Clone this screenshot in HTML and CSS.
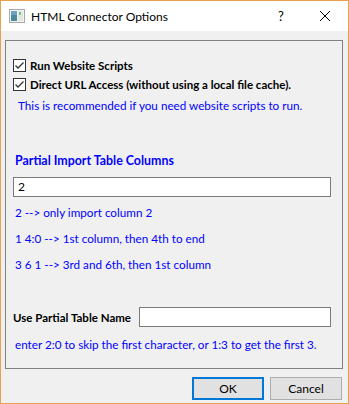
FILE: index.html
```html
<!DOCTYPE html>
<html lang="en">
<head>
  <meta charset="UTF-8" />
  <title>HTML Connector Options</title>
  <link rel="stylesheet" href="styles.css">
</head>
<body>
  <div class="window">
    <div class="titlebar">
      <svg class="app-icon" width="16" height="14" viewBox="0 0 16 14">
        <rect x="0.5" y="0.5" width="15" height="13" fill="#f4f4f4" stroke="#a8a8a8"/>
        <rect x="2" y="2" width="6" height="10" fill="#4a8a9a"/>
        <rect x="2" y="2" width="6" height="4" fill="#6fa0c0"/>
        <rect x="9" y="2" width="5" height="10" fill="#dde8e0"/>
        <rect x="10" y="3" width="2" height="3" fill="#7cc08a"/>
      </svg>
      <span class="title">HTML Connector Options</span>
      <span class="help">?</span>
      <svg class="close" width="12" height="12" viewBox="0 0 12 12">
        <path d="M1 1 L11 11 M11 1 L1 11" stroke="#000" stroke-width="1"/>
      </svg>
    </div>

    <div class="content">
      <div class="group">
        <label class="check-row row-first">
          <span class="checkbox">
            <svg width="11" height="11" viewBox="0 0 11 11"><path d="M1.5 5.5 L4 8 L9.5 2.5" fill="none" stroke="#333" stroke-width="1.3"/></svg>
          </span>
          <span class="bold">Run Website Scripts</span>
        </label>
        <label class="check-row">
          <span class="checkbox">
            <svg width="11" height="11" viewBox="0 0 11 11"><path d="M1.5 5.5 L4 8 L9.5 2.5" fill="none" stroke="#333" stroke-width="1.3"/></svg>
          </span>
          <span class="bold">Direct URL Access (without using a local file cache).</span>
        </label>
        <p class="note note-indent">This is recommended if you need website scripts to run.</p>

        <p class="heading">Partial Import Table Columns</p>
        <div class="field">2</div>
        <p class="note hint first-hint">2 --&gt; only import column 2</p>
        <p class="note hint">1 4:0 --&gt; 1st column, then 4th to end</p>
        <p class="note hint">3 6 1 --&gt; 3rd and 6th, then 1st column</p>

        <div class="name-row">
          <span class="bold">Use Partial Table Name</span>
          <div class="field field-name"></div>
        </div>
        <p class="note hint last-hint">enter 2:0 to skip the first character, or 1:3 to get the first 3.</p>
      </div>

      <div class="buttons">
        <button class="btn btn-default">OK</button>
        <button class="btn">Cancel</button>
      </div>
    </div>
  </div>
</body>
</html>
```

FILE: styles.css
```css
* { margin: 0; padding: 0; box-sizing: border-box; }

html, body {
  width: 349px;
  height: 404px;
  overflow: hidden;
  font-family: Lato, "Noto Sans", sans-serif;
  font-size: 11.5px;
  color: #000;
}

.window {
  width: 349px;
  height: 404px;
  border: 1px solid #e9a04f;
  background: #f0f0f0;
  display: flex;
  flex-direction: column;
}

/* Title bar */
.titlebar {
  height: 30px;
  background: #fff;
  display: flex;
  align-items: center;
  padding-left: 8px;
}
.app-icon { margin-right: 6px; }
.title { flex: 1; font-size: 12px; }
.help { width: 14px; margin-right: 27px; font-size: 13px; }
.close { margin-right: 17px; }

/* Body */
.content {
  padding: 9px 5px 0 4px;
}

.group {
  height: 329px;
  border: 1px solid #808080;
  padding: 18px 0 0 7px;
}

.check-row {
  display: flex;
  align-items: center;
  height: 13px;
  line-height: 13px;
  margin-top: 6px;
  white-space: nowrap;
}
.row-first { margin-top: 0; }

.checkbox {
  flex: none;
  width: 13px;
  height: 13px;
  border: 1px solid #333;
  background: #fff;
  display: flex;
  align-items: center;
  justify-content: center;
  margin-right: 4px;
}

.bold { font-weight: bold; }

.note {
  color: #0000ff;
  font-size: 11.7px;
  line-height: 16px;
  height: 16px;
  white-space: nowrap;
}
.note-indent { margin: 6px 0 0 5px; }

.heading {
  color: #0000ff;
  font-weight: bold;
  font-size: 12.4px;
  line-height: 16px;
  margin: 40px 0 0 2px;
}

.field {
  width: 318px;
  height: 20px;
  border: 1px solid #7a7a7a;
  background: #fff;
  padding: 0 4px;
  font-size: 12px;
  line-height: 18px;
  margin-top: 8px;
}

.hint { margin: 10px 0 0 2px; }
.first-hint { margin-top: 7px; }
.last-hint { margin-top: 9px; }

.name-row {
  display: flex;
  align-items: center;
  margin-top: 35px;
  white-space: nowrap;
}
.name-row .bold { width: 126px; }
.field-name { width: 192px; margin-top: 0; }

.buttons {
  display: flex;
  justify-content: flex-end;
  gap: 6px;
  padding: 8px 1px 0 0;
}

.btn {
  width: 72px;
  height: 23px;
  font-family: inherit;
  font-size: 12px;
  background: #e1e1e1;
  border: 1px solid #adadad;
}
.btn-default { border: 2px solid #0078d7; }
```
